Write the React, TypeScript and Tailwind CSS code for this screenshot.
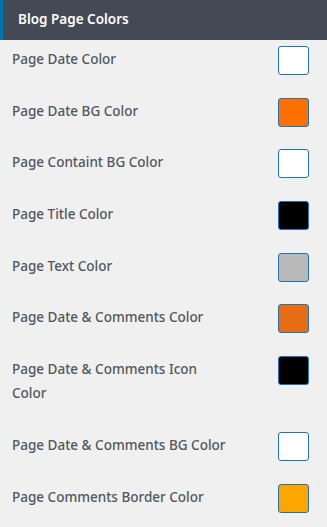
const rows: { label: string[]; color: string }[] = [
  { label: ["Page Date Color"], color: "#ffffff" },
  { label: ["Page Date BG Color"], color: "#ff7000" },
  { label: ["Page Containt BG Color"], color: "#ffffff" },
  { label: ["Page Title Color"], color: "#000000" },
  { label: ["Page Text Color"], color: "#b9b9b9" },
  { label: ["Page Date & Comments Color"], color: "#e86c12" },
  { label: ["Page Date & Comments Icon", "Color"], color: "#000000" },
  { label: ["Page Date & Comments BG Color"], color: "#ffffff" },
  { label: ["Page Comments Border Color"], color: "#ffa500" },
];

export default function App() {
  return (
    <div className="w-[327px] h-[527px] overflow-hidden bg-[#f0f0f1] font-['Noto_Sans',sans-serif]">
      <div className="flex h-[40px] bg-[#434a56]">
        <div className="w-[3px] bg-[#0073aa]" />
        <h2 className="pl-[15px] pt-[9px] text-[13.5px] leading-[20px] font-semibold text-white">
          Blog Page Colors
        </h2>
      </div>
      <div>
        {rows.map((r, i) => (
          <div key={i} className="flex items-start justify-between pl-[12px] pr-[18px] pt-[6px] pb-[15.7px]">
            <div className="pt-px pb-[5px] text-[13.5px] leading-[24px] font-medium text-[#50575e] whitespace-nowrap">
              {r.label.map((l, j) => (
                <div key={j}>{l}</div>
              ))}
            </div>
            <div
              className="w-[31px] h-[29px] rounded-[3px] border border-[#2271b1]"
              style={{ backgroundColor: r.color }}
            />
          </div>
        ))}
      </div>
    </div>
  );
}
